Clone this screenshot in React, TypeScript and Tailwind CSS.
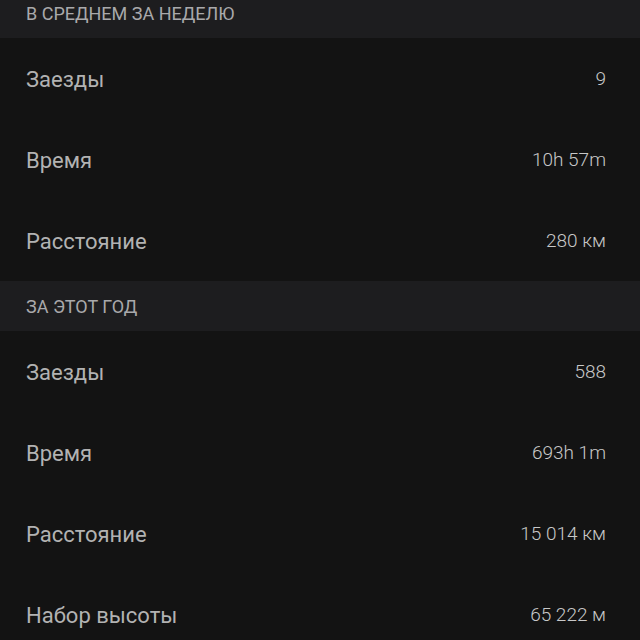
import React from "react";

type Row = { label: string; value: string };

const sections: { title: string; rows: Row[] }[] = [
  {
    title: "В среднем за неделю",
    rows: [
      { label: "Заезды", value: "9" },
      { label: "Время", value: "10h 57m" },
      { label: "Расстояние", value: "280 км" },
    ],
  },
  {
    title: "За этот год",
    rows: [
      { label: "Заезды", value: "588" },
      { label: "Время", value: "693h 1m" },
      { label: "Расстояние", value: "15 014 км" },
      { label: "Набор высоты", value: "65 222 м" },
    ],
  },
];

export default function App() {
  return (
    <div
      className="w-[640px] h-[640px] overflow-hidden bg-[#131313]"
      style={{ fontFamily: "Roboto, 'Noto Sans', sans-serif" }}
    >
      <div className="-mt-[12px] flex flex-col">
        {sections.map((section) => (
          <div key={section.title} className="flex flex-col">
            {/* Section header */}
            <div className="h-[50px] bg-[#1d1d1f] flex items-center pl-[26px]">
              <span className="text-[18px] uppercase text-[#a9a9ab]">
                {section.title}
              </span>
            </div>
            {section.rows.map((row) => (
              <div
                key={row.label}
                className="h-[81px] flex items-center justify-between pl-[26px] pr-[34px] pt-[2px]"
              >
                <span className="text-[22px] text-[#b2b2b2]">{row.label}</span>
                <span className="text-[19px] font-light text-[#c8c8c8]">{row.value}</span>
              </div>
            ))}
          </div>
        ))}
      </div>
    </div>
  );
}
